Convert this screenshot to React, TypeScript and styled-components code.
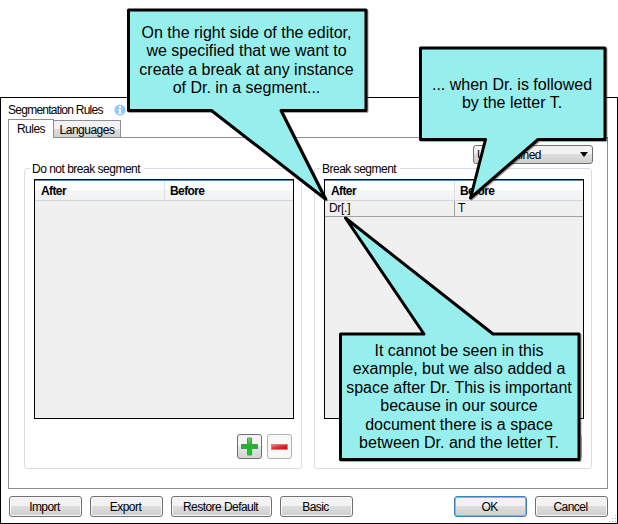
import React from 'react';
import styled, { createGlobalStyle } from 'styled-components';

const GlobalStyle = createGlobalStyle`
  * { box-sizing: border-box; }
  body { margin: 0; background: #fff; font-family: "Liberation Sans", Arial, sans-serif; font-size: 12px; color: #000; }
`;

const Stage = styled.div`
  position: relative;
  width: 618px;
  height: 524px;
  padding-top: 97px;
  overflow: hidden;
`;

const Dialog = styled.main`
  height: 427px;
  border: 1px solid #000;
  padding: 0 9px 0 7px;
  display: flex;
  flex-direction: column;
`;

const TitleRow = styled.header`
  height: 21px;
  padding-top: 5px;
  display: flex;
  gap: 12px;
  line-height: 14px;
`;

const Title = styled.span`
  width: 94px;
  white-space: nowrap;
  letter-spacing: -0.74px;
`;

const TabStrip = styled.nav`
  height: 18px;
  display: flex;
  align-items: flex-end;
  position: relative;
  z-index: 1;
`;

const Tab = styled.div<{ $active?: boolean }>`
  width: ${p => (p.$active ? 46 : 67)}px;
  height: ${p => (p.$active ? 19 : 17)}px;
  margin-bottom: ${p => (p.$active ? -1 : 0)}px;
  border: 1px solid #8c8e94;
  border-left-width: ${p => (p.$active ? 1 : 0)}px;
  border-bottom: none;
  background: ${p => (p.$active ? '#fff' : 'linear-gradient(#f2f2f2 0 48%, #dedede 50%, #d2d2d2)')};
  text-align: center;
  line-height: 18px;
  letter-spacing: -0.5px;
`;

const Panel = styled.section`
  height: 352px;
  border: 1px solid #8c8e94;
  padding: 7px 15px 0;
`;

const SelectRow = styled.div`
  height: 17px;
  display: flex;
  justify-content: flex-end;
`;

const Select = styled.div`
  width: 120px;
  height: 19px;
  margin-right: -1px;
  border: 1px solid #707070;
  border-radius: 3px;
  background: linear-gradient(#f2f2f2 0 48%, #dddddd 50%, #cfcfcf);
  letter-spacing: -0.5px;
  padding: 0 4px 0 3px;
  display: flex;
  justify-content: space-between;
  align-items: center;
  position: relative;
`;

const Groups = styled.div`
  display: flex;
  gap: 12px;
`;

const Group = styled.section`
  width: 278px;
  height: 307px;
  display: flex;
  flex-direction: column;
  position: relative;
  padding: 0 9px 0 10px;
  &::before {
    content: '';
    position: absolute;
    inset: 6px 0 0;
    border: 1px solid #d5dfe5;
    border-radius: 3px;
  }
`;

const Legend = styled.h2`
  position: relative;
  align-self: flex-start;
  margin: 0 0 3px -4px;
  padding: 0 4px 0 2px;
  height: 14px;
  font-size: 12px;
  font-weight: normal;
  line-height: 14px;
  letter-spacing: -0.5px;
  background: #fff;
`;

const Grid = styled.div`
  position: relative;
  width: 260px;
  height: 240px;
  border: 1px solid #000;
  border-top-color: #111;
  background: #f0f0f0;
`;

const HeadRow = styled.div`
  display: grid;
  grid-template-columns: 130px 1fr;
  height: 21px;
  border-top: 1px solid #5a86b4;
  border-bottom: 1px solid #d5d5d5;
  background: linear-gradient(#fff 0 45%, #f5f6f8 50%, #f1f2f4);
  font-weight: bold;
  letter-spacing: -0.6px;
`;

const HeadCell = styled.div`
  padding: 3px 0 0 6px;
  line-height: 14px;
  border-right: 1px solid #dedfe1;
  &:last-child { padding-left: 5px; border-right: 0; }
`;

const DataRow = styled.div`
  display: grid;
  grid-template-columns: 130px 1fr;
  height: 16px;
  border-bottom: 1px solid #a0a0a0;
`;

const DataCell = styled.div`
  padding: 0 4px;
  line-height: 15px;
  letter-spacing: -0.3px;
  border-right: 1px solid #a0a0a0;
  &:last-child { padding-left: 3px; border-right: 0; }
`;

const Tools = styled.div`
  position: relative;
  display: flex;
  justify-content: flex-end;
  gap: 5px;
  padding-top: 15px;
  margin-right: 1px;
`;

const ToolButton = styled.button<{ $disabled?: boolean }>`
  width: 25px;
  height: 25px;
  padding: 0;
  border: 1px solid ${p => (p.$disabled ? '#adb2b5' : '#707070')};
  border-radius: 3px;
  background: ${p => (p.$disabled ? '#f8f8f8' : 'linear-gradient(#f4f4f4 0 48%, #e3e3e3 50%, #d4d4d4)')};
  display: grid;
  place-items: center;
`;

const Footer = styled.footer`
  display: flex;
  gap: 8px;
  padding: 7px 0 0 1px;
`;

const Button = styled.button<{ $width?: number; $primary?: boolean; $push?: boolean }>`
  width: ${p => p.$width ?? 73}px;
  height: 21px;
  padding: 0 2px 0 0;
  margin-left: ${p => (p.$push ? 'auto' : '0')};
  border: 1px solid ${p => (p.$primary ? '#3c7fb1' : '#707070')};
  border-radius: 3px;
  background: linear-gradient(#f2f2f2 0 48%, #dddddd 50%, #cfcfcf);
  box-shadow: inset 0 0 0 1px ${p => (p.$primary ? '#48d0f5' : '#f8f8f8')};
  font: 12px "Liberation Sans", Arial, sans-serif;
  letter-spacing: -0.55px;
  color: #000;
`;

const Grip = styled.svg`
  position: absolute;
  right: 1px;
  bottom: 1px;
`;

const Bubbles = styled.svg`
  position: absolute;
  inset: 0;
  filter: drop-shadow(1px 1px 0 rgba(0, 0, 0, 0.35));
`;

const Note = styled.p<{ $x: number; $y: number; $w: number }>`
  position: absolute;
  left: ${p => p.$x}px;
  top: ${p => p.$y}px;
  width: ${p => p.$w}px;
  margin: 0;
  text-align: center;
  white-space: pre;
  font-size: 16px;
  line-height: 18.4px;
`;

function RuleGrid({ rows = [] }: { rows?: string[][] }) {
  return (
    <Grid>
      <HeadRow><HeadCell>After</HeadCell><HeadCell>Before</HeadCell></HeadRow>
      {rows.map(([after, before]) => (
        <DataRow key={after}><DataCell>{after}</DataCell><DataCell>{before}</DataCell></DataRow>
      ))}
    </Grid>
  );
}

function GroupTools() {
  return (
    <Tools>
      <ToolButton aria-label="Add">
        <svg width="19" height="19" viewBox="0 0 19 19">
          <defs><linearGradient id="green" x2="0" y2="1"><stop stopColor="#6fd07a" /><stop offset=".45" stopColor="#22b02e" /><stop offset="1" stopColor="#12d818" /></linearGradient></defs>
          <path d="M7.500 1h4v6.500h6v4h-6v6.500h-4v-6.500h-6v-4h6z" fill="url(#green)" stroke="#3aa046" />
        </svg>
      </ToolButton>
      <ToolButton aria-label="Remove" $disabled>
        <svg width="19" height="19" viewBox="0 0 19 19">
          <defs><linearGradient id="red" x2="1" y2="1"><stop stopColor="#ef8585" /><stop offset=".5" stopColor="#d62c32" /><stop offset="1" stopColor="#d00008" /></linearGradient></defs>
          <rect x="1.500" y="7.500" width="16" height="5" fill="url(#red)" stroke="#dc7b7e" />
        </svg>
      </ToolButton>
    </Tools>
  );
}

export default function App() {
  return (
    <Stage>
      <GlobalStyle />
      <Dialog>
        <TitleRow>
          <Title>Segmentation Rules</Title>
          <svg width="12" height="14" viewBox="0 0 12 14">
            <circle cx="6" cy="7" r="5.6" fill="#92c8fb" />
            <path d="M5 3h2v2H5zM4.2 6H7v4h1v1H4v-1h1V7h-.8z" fill="#fff" />
          </svg>
        </TitleRow>
        <TabStrip><Tab $active>Rules</Tab><Tab>Languages</Tab></TabStrip>
        <Panel>
          <SelectRow>
            <Select>
              <span>User Defined</span>
              <svg width="8" height="5"><path d="M0 0h8L4 5z" /></svg>
            </Select>
          </SelectRow>
          <Groups>
            <Group><Legend>Do not break segment</Legend><RuleGrid /><GroupTools /></Group>
            <Group><Legend>Break segment</Legend><RuleGrid rows={[['Dr[.]', 'T']]} /><GroupTools /></Group>
          </Groups>
        </Panel>
        <Footer>
          <Button>Import</Button>
          <Button>Export</Button>
          <Button $width={101}>Restore Default</Button>
          <Button>Basic</Button>
          <Button $push $primary>OK</Button>
          <Button>Cancel</Button>
        </Footer>
      </Dialog>
      <Grip width="9" height="9"><path d="M7 1h1v1H7zM4 4h1v1H4zM7 4h1v1H7zM1 7h1v1H1zM4 7h1v1H4zM7 7h1v1H7z" fill="#b4b4b4" /></Grip>
      <Bubbles width="618" height="524" viewBox="0 0 618 524" fill="#96efec" stroke="#000" strokeWidth="3" strokeLinejoin="round">
        <path d="M128.500 10H366V110.500H281L325.500 199L211.500 110.500H128.500Z" />
        <path d="M420.500 48H605V139.500H538L470.500 198L485.500 139.500H420.500Z" />
        <path d="M340.500 334H424L345.500 218L493 334H579V459.500H340.500Z" />
      </Bubbles>
      <Note $x={128} $y={24} $w={237}>{'On the right side of the editor,\nwe specified that we want to\ncreate a break at any instance\nof Dr. in a segment...'}</Note>
      <Note $x={420} $y={76} $w={184}>{'... when Dr. is followed\nby the letter T.'}</Note>
      <Note $x={340} $y={342} $w={238}>{'It cannot be seen in this\nexample, but we also added a\nspace after Dr. This is important\nbecause in our source\ndocument there is a space\nbetween Dr. and the letter T.'}</Note>
    </Stage>
  );
}
